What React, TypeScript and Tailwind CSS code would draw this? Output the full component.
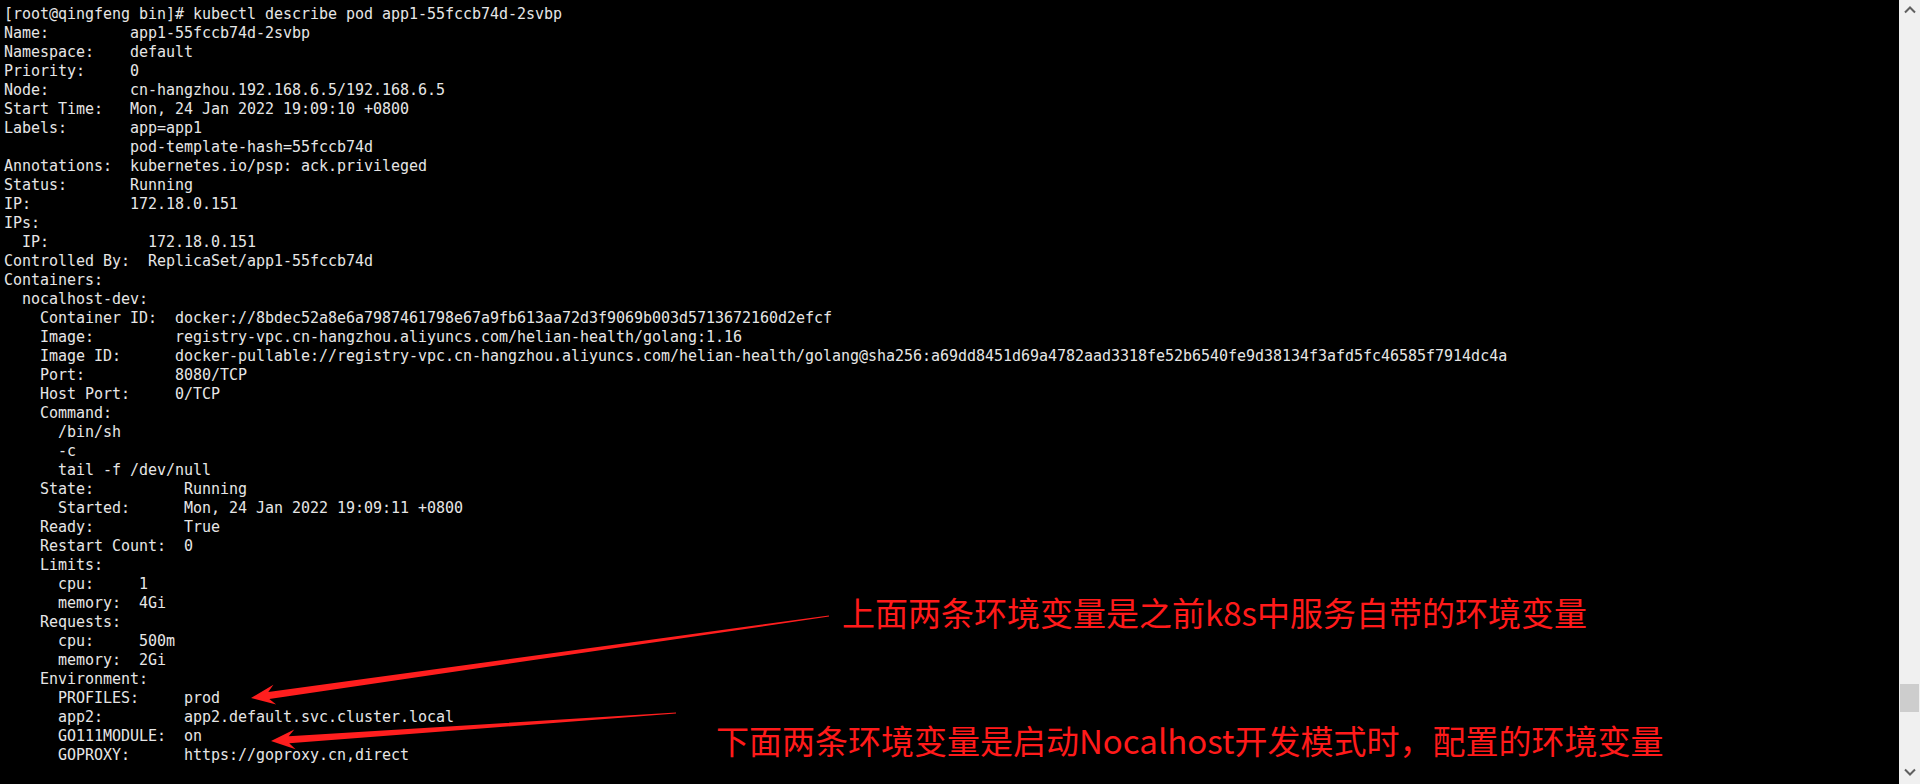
const lines = [
  "[root@qingfeng bin]# kubectl describe pod app1-55fccb74d-2svbp",
  "Name:         app1-55fccb74d-2svbp",
  "Namespace:    default",
  "Priority:     0",
  "Node:         cn-hangzhou.192.168.6.5/192.168.6.5",
  "Start Time:   Mon, 24 Jan 2022 19:09:10 +0800",
  "Labels:       app=app1",
  "              pod-template-hash=55fccb74d",
  "Annotations:  kubernetes.io/psp: ack.privileged",
  "Status:       Running",
  "IP:           172.18.0.151",
  "IPs:",
  "  IP:           172.18.0.151",
  "Controlled By:  ReplicaSet/app1-55fccb74d",
  "Containers:",
  "  nocalhost-dev:",
  "    Container ID:  docker://8bdec52a8e6a7987461798e67a9fb613aa72d3f9069b003d5713672160d2efcf",
  "    Image:         registry-vpc.cn-hangzhou.aliyuncs.com/helian-health/golang:1.16",
  "    Image ID:      docker-pullable://registry-vpc.cn-hangzhou.aliyuncs.com/helian-health/golang@sha256:a69dd8451d69a4782aad3318fe52b6540fe9d38134f3afd5fc46585f7914dc4a",
  "    Port:          8080/TCP",
  "    Host Port:     0/TCP",
  "    Command:",
  "      /bin/sh",
  "      -c",
  "      tail -f /dev/null",
  "    State:          Running",
  "      Started:      Mon, 24 Jan 2022 19:09:11 +0800",
  "    Ready:          True",
  "    Restart Count:  0",
  "    Limits:",
  "      cpu:     1",
  "      memory:  4Gi",
  "    Requests:",
  "      cpu:     500m",
  "      memory:  2Gi",
  "    Environment:",
  "      PROFILES:     prod",
  "      app2:         app2.default.svc.cluster.local",
  "      GO111MODULE:  on",
  "      GOPROXY:      https://goproxy.cn,direct",
];

// tapered hand-drawn style arrow: thin at the tail, wide at the head
function arrowPoints(tx: number, ty: number, ex: number, ey: number) {
  const dx = ex - tx;
  const dy = ey - ty;
  const len = Math.hypot(dx, dy);
  const ux = dx / len;
  const uy = dy / len;
  const nx = -uy;
  const ny = ux;
  const headLen = 24;
  const headW = 10;
  const neck = 18;
  const shaftW = 3.5;
  const tailW = 0.6;
  const p = (x: number, y: number) => `${x.toFixed(1)},${y.toFixed(1)}`;
  return [
    p(tx, ty),
    p(tx + ux * headLen + nx * headW, ty + uy * headLen + ny * headW),
    p(tx + ux * neck + nx * shaftW, ty + uy * neck + ny * shaftW),
    p(ex + nx * tailW, ey + ny * tailW),
    p(ex - nx * tailW, ey - ny * tailW),
    p(tx + ux * neck - nx * shaftW, ty + uy * neck - ny * shaftW),
    p(tx + ux * headLen - nx * headW, ty + uy * headLen - ny * headW),
  ].join(" ");
}

export default function App() {
  return (
    <div className="relative flex h-[784px] w-full overflow-hidden bg-black">
      <div className="flex-1 pl-[4px] pt-[5px] font-['DejaVu_Sans_Mono',monospace] text-[15px] leading-[19px] tracking-[-0.03px] text-[#e6e6e6]">
        {lines.map((l, i) => (
          <div key={i} className="h-[19px] w-fit whitespace-pre">
            {l}
          </div>
        ))}
      </div>

      <div className="flex w-[21px] flex-col items-center bg-[#f0f0f0]">
        <svg width="12" height="8" viewBox="0 0 12 8" className="mt-[6px]">
          <path d="M1 6.5 L6 1.5 L11 6.5" fill="none" stroke="#606060" strokeWidth="2" />
        </svg>
        <div className="flex-1" />
        <div className="h-[28px] w-[19px] bg-[#cdcdcd]" />
        <div className="h-[56px]" />
        <svg width="12" height="8" viewBox="0 0 12 8" className="mb-[8px]">
          <path d="M1 1.5 L6 6.5 L11 1.5" fill="none" stroke="#606060" strokeWidth="2" />
        </svg>
      </div>

      <svg className="pointer-events-none absolute left-0 top-0" width="1920" height="784">
        <polygon points={arrowPoints(251, 698, 829, 616)} fill="#ff1e1e" />
        <polygon points={arrowPoints(271, 741, 676, 713)} fill="#ff1e1e" />
      </svg>

      <div className="absolute left-[842px] top-[592px] font-['Noto_Sans_CJK_SC',sans-serif] text-[33px] leading-[40px] text-[#ff1a1a]">
        上面两条环境变量是之前k8s中服务自带的环境变量
      </div>
      <div className="absolute left-[716px] top-[720px] font-['Noto_Sans_CJK_SC',sans-serif] text-[33px] leading-[40px] text-[#ff1a1a]">
        下面两条环境变量是启动Nocalhost开发模式时，配置的环境变量
      </div>
    </div>
  );
}
